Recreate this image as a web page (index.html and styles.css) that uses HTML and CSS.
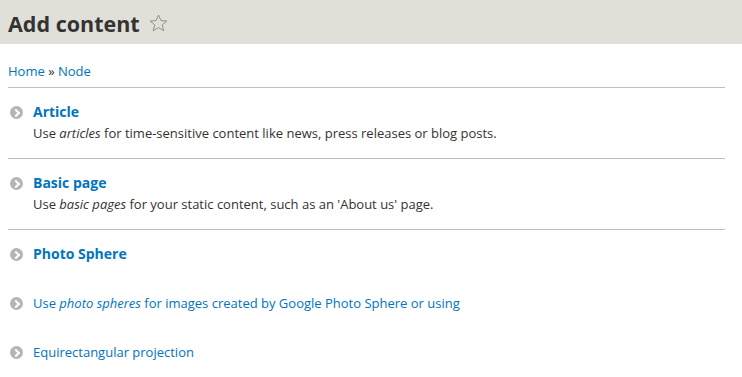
FILE: index.html
```html
<!DOCTYPE html>
<html lang="en">
<head>
    <meta charset="UTF-8">
    <title>Add content</title>
    <link rel="stylesheet" href="styles.css">
</head>
<body>
    <div class="page-header">
        <h1>Add content</h1>
        <svg class="star" width="19" height="19" viewBox="0 0 20 20">
            <polygon points="10,1.2 12.6,7 18.8,7.4 14,11.4 15.5,17.6 10,14.3 4.5,17.6 6,11.4 1.2,7.4 7.4,7"></polygon>
        </svg>
    </div>

    <div class="content">
        <div class="breadcrumb"><a href="#">Home</a> » <a href="#">Node</a></div>

        <ul class="node-type-list">
            <li class="type">
                <div class="type-title">
                    <span class="arrow"></span>
                    <a href="#">Article</a>
                </div>
                <div class="type-desc">Use <em>articles</em> for time-sensitive content like news, press releases or blog posts.</div>
            </li>
            <li class="type">
                <div class="type-title">
                    <span class="arrow"></span>
                    <a href="#">Basic page</a>
                </div>
                <div class="type-desc">Use <em>basic pages</em> for your static content, such as an 'About us' page.</div>
            </li>
            <li class="type last">
                <div class="type-title">
                    <span class="arrow"></span>
                    <a href="#">Photo Sphere</a>
                </div>
                <div class="loose">
                    <span class="arrow"></span>
                    <a href="#">Use <em>photo spheres</em> for images created by Google Photo Sphere or using</a>
                </div>
                <div class="loose">
                    <span class="arrow"></span>
                    <a href="#">Equirectangular projection</a>
                </div>
            </li>
        </ul>
    </div>
</body>
</html>
```

FILE: styles.css
```css
* {
    margin: 0;
    padding: 0;
    box-sizing: border-box;
}

body {
    font-family: 'Open Sans', 'Liberation Sans', sans-serif;
    font-size: 13px;
    color: #333;
    background: #fff;
}

a {
    color: #0074bd;
    text-decoration: none;
}

.page-header {
    background: #e0e0d8;
    height: 44px;
    padding: 3px 8px 0;
    display: flex;
    align-items: center;
    gap: 9px;
}

h1 {
    font-size: 21.5px;
    font-weight: 700;
    color: #333;
    line-height: 1;
}

.star {
    fill: none;
    stroke: #8c8c7f;
    stroke-width: 1;
}

.content {
    padding: 0 17px 0 8px;
}

.breadcrumb {
    padding-top: 17px;
    line-height: 20px;
    height: 44px;
    border-bottom: 1px solid #bebfb9;
}

.node-type-list {
    list-style: none;
}

.type {
    padding: 14px 0 16px;
    border-bottom: 1px solid #bebfb9;
}

.type.last {
    border-bottom: none;
}

.type-title,
.loose {
    display: flex;
    align-items: center;
    line-height: 20px;
}

.type-title a {
    font-size: 14px;
    font-weight: 700;
}

.loose {
    margin-top: 29px;
}

.arrow {
    width: 13px;
    height: 13px;
    border-radius: 50%;
    background: #b5b5b5;
    margin: 0 10px 0 2px;
    position: relative;
    flex-shrink: 0;
}

.arrow::after {
    content: '';
    position: absolute;
    left: 3px;
    top: 4px;
    width: 4px;
    height: 4px;
    border-top: 2px solid #fff;
    border-right: 2px solid #fff;
    transform: rotate(45deg);
}

.type-desc {
    margin: 2px 0 0 25px;
    line-height: 18px;
    font-size: 13px;
}
```
